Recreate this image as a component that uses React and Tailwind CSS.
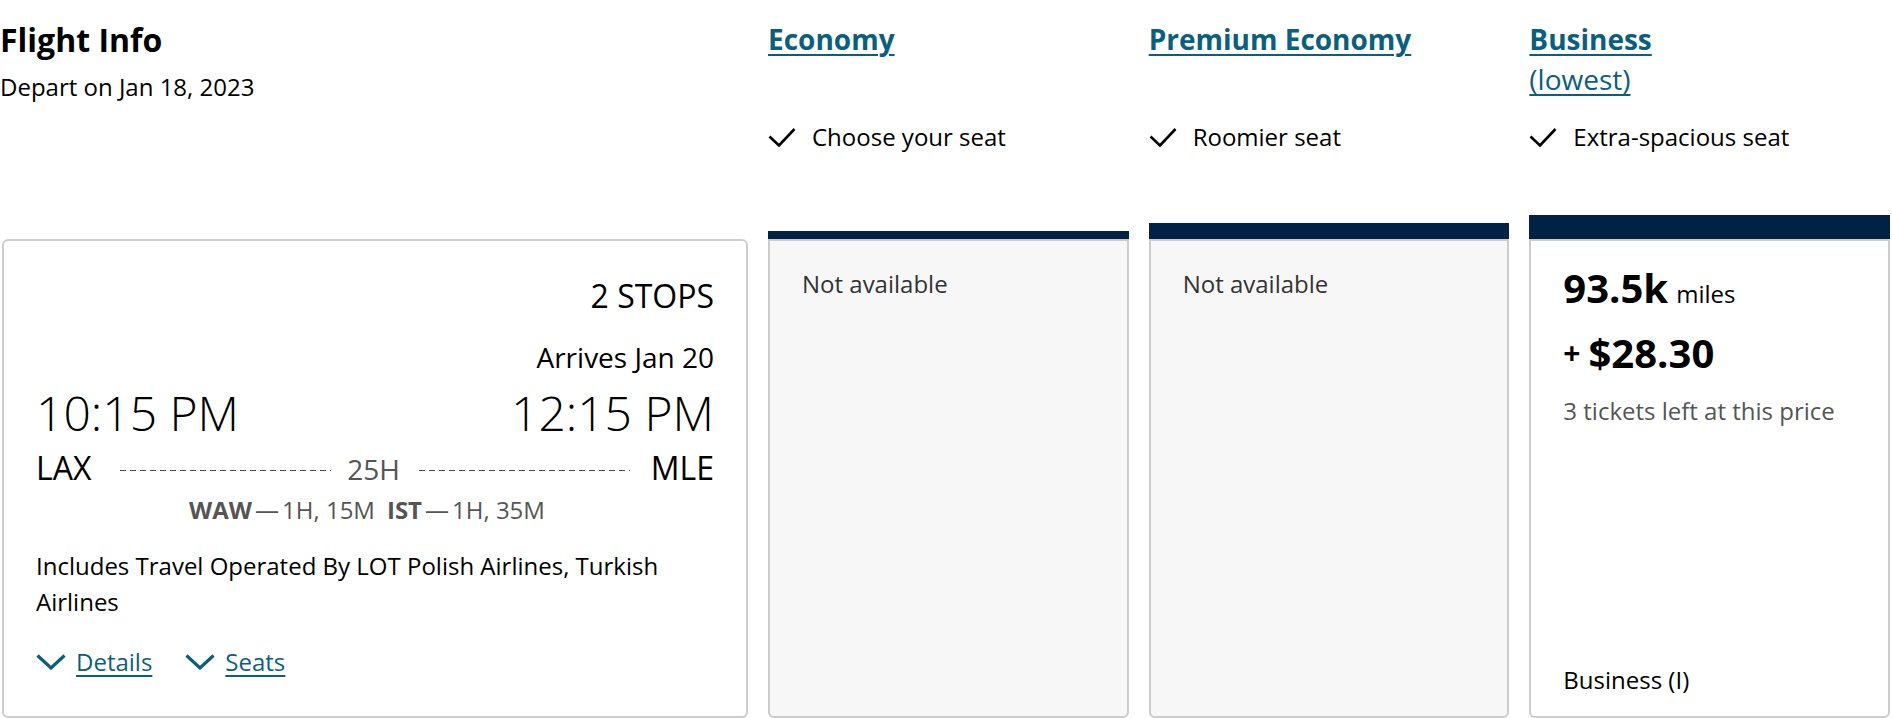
import React from "react";

const LINK = "text-[#0a5f80]";

function Check() {
  return (
    <svg width="28" height="20" viewBox="0 0 28 20" fill="none" className="shrink-0">
      <path d="M1.5 9.5 L11 18.5 L26.5 2" stroke="#000" strokeWidth="2.6" />
    </svg>
  );
}

function Chevron() {
  return (
    <svg width="30" height="16" viewBox="0 0 30 16" fill="none" className="shrink-0">
      <path d="M1.5 1.5 L15 14 L28.5 1.5" stroke="#0a5f80" strokeWidth="3.2" />
    </svg>
  );
}

function ClassHeader({ title, lowest, feature, barClass }) {
  return (
    <div className="flex flex-col">
      <div className="h-[121px] pt-[20px]">
        <a
          href="#"
          className={`block w-fit text-[28px] leading-[38px] font-bold underline underline-offset-[4px] decoration-2 ${LINK}`}
        >
          {title}
        </a>
        {lowest && (
          <a
            href="#"
            className={`mt-[2px] block w-fit text-[28px] leading-[38px] underline underline-offset-[4px] ${LINK}`}
          >
            (lowest)
          </a>
        )}
      </div>
      <div className="flex items-center gap-[16px] text-[24px] leading-[32px]">
        <Check />
        <span>{feature}</span>
      </div>
      <div className={`mt-auto bg-[#002244] ${barClass}`} />
    </div>
  );
}

function Dashes({ className }) {
  return (
    <div
      className={`h-px flex-1 self-center mt-[4px] bg-[image:repeating-linear-gradient(90deg,#4a4a4a_0_6px,transparent_6px_10px)] ${className}`}
    />
  );
}

function FlightCard() {
  return (
    <div className="ml-[2px] rounded-[6px] border-2 border-[#cccccc] bg-white px-[32px] pt-[35px] pb-[36px]">
      <div className="text-right text-[32px] leading-[40px]">2 STOPS</div>
      <div className="mt-[23px] text-right text-[28px] leading-[36px]">Arrives Jan 20</div>
      <div className="mt-[10px] flex justify-between text-[48px] leading-[56px] font-light">
        <span>10:15 PM</span>
        <span>12:15 PM</span>
      </div>
      <div className="mt-[7px] flex items-baseline">
        <span className="text-[32px] leading-[40px]">LAX</span>
        <Dashes className="ml-[29px] mr-[16px]" />
        <span className="text-[28px] leading-[36px] text-[#555555]">25H</span>
        <Dashes className="ml-[19px] mr-[21px]" />
        <span className="text-[32px] leading-[40px]">MLE</span>
      </div>
      <div className="mt-[7px] flex justify-center gap-[12px] pr-[16px] text-[24px] leading-[30px] text-[#555555]">
        <span>
          <b className="font-bold">WAW</b>
          <span className="mx-[3px]">—</span>1H, 15M
        </span>
        <span>
          <b className="font-bold">IST</b>
          <span className="mx-[3px]">—</span>1H, 35M
        </span>
      </div>
      <p className="mt-[23px] text-[24px] leading-[36px]">
        Includes Travel Operated By LOT Polish Airlines, Turkish Airlines
      </p>
      <div className="mt-[24px] flex items-center gap-[33px] text-[24px] leading-[36px]">
        <a href="#" className="flex items-center gap-[10px]">
          <Chevron />
          <span className={`underline underline-offset-[4px] ${LINK}`}>Details</span>
        </a>
        <a href="#" className="flex items-center gap-[10px]">
          <Chevron />
          <span className={`underline underline-offset-[4px] ${LINK}`}>Seats</span>
        </a>
      </div>
    </div>
  );
}

function NotAvailable() {
  return (
    <div className="rounded-b-[6px] border-2 border-[#cccccc] bg-[#f7f7f7] px-[32px] pt-[27px]">
      <p className="text-[24px] leading-[32px] text-[#333333]">Not available</p>
    </div>
  );
}

function BusinessCard() {
  return (
    <div className="flex flex-col rounded-b-[6px] border-2 border-[#cccccc] bg-white px-[32px] pt-[23px] pb-[20px]">
      <div className="flex items-baseline gap-[8px]">
        <span className="text-[40px] leading-[48px] font-bold">93.5k</span>
        <span className="text-[24px] leading-[32px]">miles</span>
      </div>
      <div className="mt-[17px] flex items-center gap-[8px]">
        <span className="text-[30px] leading-[30px] font-bold">+</span>
        <span className="text-[40px] leading-[48px] font-bold">$28.30</span>
      </div>
      <p className="mt-[18px] text-[24px] leading-[32px] text-[#555555]">3 tickets left at this price</p>
      <p className="mt-auto text-[24px] leading-[32px]">Business (I)</p>
    </div>
  );
}

export default function App() {
  return (
    <div className="w-[1892px] bg-white font-['Open_Sans',sans-serif] text-black">
      <div className="grid grid-cols-[748px_1fr_1fr_1fr] grid-rows-[239px_auto] gap-x-[20px] pr-[2px]">
        <div className="pt-[20px]">
          <h1 className="text-[32px] leading-[40px] font-bold">Flight Info</h1>
          <p className="mt-[11px] text-[24px] leading-[32px]">Depart on Jan 18, 2023</p>
        </div>
        <ClassHeader title="Economy" feature="Choose your seat" barClass="h-[8px]" />
        <ClassHeader title="Premium Economy" feature="Roomier seat" barClass="h-[16px]" />
        <ClassHeader title="Business" lowest feature="Extra-spacious seat" barClass="h-[24px]" />

        <FlightCard />
        <NotAvailable />
        <NotAvailable />
        <BusinessCard />
      </div>
    </div>
  );
}
